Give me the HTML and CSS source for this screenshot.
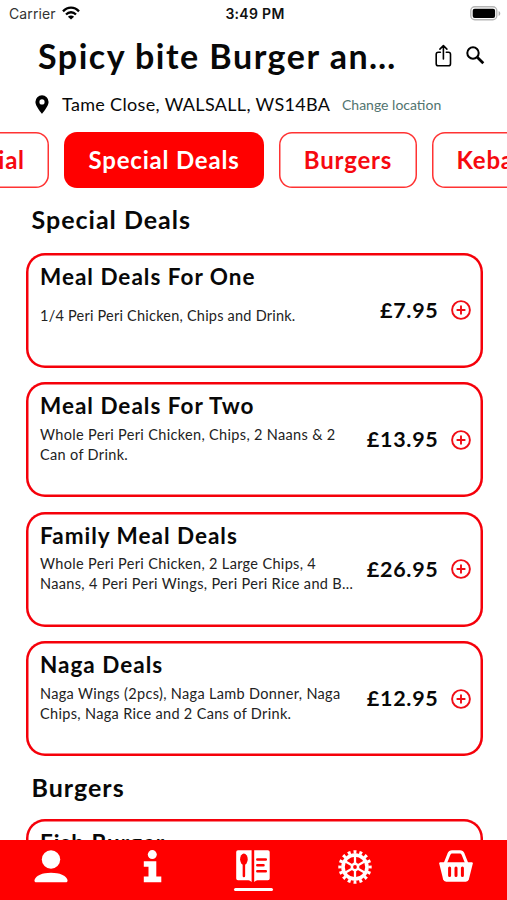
FILE: index.html
```html
<!DOCTYPE html>
<html lang="en">
<head>
<meta charset="utf-8">
<meta name="viewport" content="width=device-width, initial-scale=1">
<title>Spicy bite Burger</title>
<link rel="stylesheet" href="styles.css">
</head>
<body>
<div class="app">
  <div class="status">
    <div class="carrier"><span>Carrier</span>
      <svg width="18" height="14" viewBox="0 0 18 14" fill="none" stroke="#000" stroke-width="2.3"><path d="M1 5.4C5.6.4 12.4.4 17 5.4M4 8.5c2.9-3 7.1-3 10 0"/><path d="M9 13.6 5.9 10.8c1.8-1.7 4.4-1.7 6.2 0z" fill="#000" stroke="none"/></svg>
    </div>
    <time class="clock">3:49 PM</time>
    <svg class="battery" width="31" height="15" viewBox="0 0 31 15"><rect x=".8" y=".8" width="26" height="13" rx="4" fill="#fff" stroke="#b5b5b5" stroke-width="1.4"/><rect x="2.7" y="2.7" width="22.4" height="9.2" rx="2" fill="#000"/><path d="M28.6 5c2.2.7 2.2 4.3 0 5z" fill="#aaa"/></svg>
  </div>
  <header class="header">
    <h1 class="title">Spicy bite Burger an…</h1>
    <svg class="share" width="17" height="24" viewBox="0 0 17 24" fill="none" stroke="#000" stroke-width="1.6" stroke-linecap="round" stroke-linejoin="round"><path d="M5.4 8.2H3.3Q1.2 8.2 1.2 10.3v9.4q0 2.1 2.1 2.1h10.1q2.1 0 2.1-2.1v-9.4q0-2.1-2.1-2.1h-2.1M8.4 15V1.8M4.9 5.1l3.5-3.5 3.5 3.5"/></svg>
    <svg class="search" width="19" height="19" viewBox="0 0 19 19" fill="none" stroke="#000"><circle cx="7" cy="7" r="5.7" stroke-width="2"/><path d="M11.3 11.3l6 6" stroke-width="2.7"/></svg>
  </header>
  <div class="location">
    <svg width="14" height="19" viewBox="0 0 14 19"><path fill-rule="evenodd" d="M7 .3A6.6 6.6 0 0 0 .4 6.9C.4 11.2 7 18.7 7 18.7s6.6-7.5 6.6-11.8A6.6 6.6 0 0 0 7 .3zm0 4a2.6 2.6 0 1 1 0 5.2 2.6 2.6 0 0 1 0-5.2z"/></svg>
    <span class="address">Tame Close, WALSALL, WS14BA</span>
    <a class="change">Change location</a>
  </div>
  <nav class="tabs">
    <div class="tab tab-first">Special</div>
    <div class="tab tab-active">Special Deals</div>
    <div class="tab tab-burgers">Burgers</div>
    <div class="tab tab-last">Kebabs</div>
  </nav>
  <main class="menu">
    <h2 class="section">Special Deals</h2>
    <article class="card">
      <div class="info"><h3>Meal Deals For One</h3><p class="single">1/4 Peri Peri Chicken, Chips and Drink.</p></div>
      <span class="price">£7.95</span>
      <svg class="add" width="20" height="20" viewBox="0 0 20 20"><circle cx="10" cy="10" r="8.9"/><path d="M10 5.6v8.8M5.6 10h8.8"/></svg>
    </article>
    <article class="card">
      <div class="info"><h3>Meal Deals For Two</h3><p>Whole Peri Peri Chicken, Chips, 2 Naans &amp; 2<br>Can of Drink.</p></div>
      <span class="price">£13.95</span>
      <svg class="add" width="20" height="20" viewBox="0 0 20 20"><circle cx="10" cy="10" r="8.9"/><path d="M10 5.6v8.8M5.6 10h8.8"/></svg>
    </article>
    <article class="card">
      <div class="info"><h3>Family Meal Deals</h3><p>Whole Peri Peri Chicken, 2 Large Chips, 4<br>Naans, 4 Peri Peri Wings, Peri Peri Rice and B…</p></div>
      <span class="price">£26.95</span>
      <svg class="add" width="20" height="20" viewBox="0 0 20 20"><circle cx="10" cy="10" r="8.9"/><path d="M10 5.6v8.8M5.6 10h8.8"/></svg>
    </article>
    <article class="card">
      <div class="info"><h3>Naga Deals</h3><p>Naga Wings (2pcs), Naga Lamb Donner, Naga<br>Chips, Naga Rice and 2 Cans of Drink.</p></div>
      <span class="price">£12.95</span>
      <svg class="add" width="20" height="20" viewBox="0 0 20 20"><circle cx="10" cy="10" r="8.9"/><path d="M10 5.6v8.8M5.6 10h8.8"/></svg>
    </article>
    <h2 class="section">Burgers</h2>
    <article class="card">
      <div class="info"><h3>Fish Burger</h3></div>
    </article>
  </main>
  <footer class="bottom">
    <div class="item"><svg width="34" height="34" viewBox="0 0 34 34" fill="#fff"><circle cx="17" cy="9.5" r="9.2"/><path d="M.5 30C1.6 25.6 8.5 22.8 17 22.8S32.400 25.600 33.500 30q.4 2.300-2 2.300H2.500Q.1 32.300.5 30z"/></svg></div>
    <div class="item"><svg width="34" height="34" viewBox="0 0 34 34" fill="#fff"><circle cx="17.300" cy="4.600" r="4.500"/><path d="M8.800 11.300H21.300V26.500H26.300V32.300H8.800V26.500H13.500V16.700H8.800z"/></svg></div>
    <div class="item item-on"><svg width="34" height="34" viewBox="0 0 34 34"><path d="M2 .3H15.600V32Q14 30.300 12.500 30.300H2Q.2 30.300.2 28.500V2Q.2.3 2 .3zM18.200.3H31.900Q33.700.3 33.700 2V28.500Q33.700 30.300 31.900 30.300H21.400Q19.800 30.300 18.200 32z" fill="#fff"/><ellipse cx="7.900" cy="9.200" rx="3.800" ry="5.700" fill="red"/><path d="M7.900 12V26M21.300 9.600h8.500M21.300 15.300h6.200M21.300 21.300h8.500" stroke="red" stroke-width="2.500" stroke-linecap="round"/></svg></div>
    <div class="item"><svg width="34" height="34" viewBox="0 0 34 34" fill="none" stroke="#fff"><circle cx="17" cy="17" r="12" stroke-width="3.600"/><circle cx="17" cy="17" r="15" stroke-width="3.400" pathLength="64" stroke-dasharray="2 2" stroke-dashoffset="1"/><path d="M17 5V29M6.600 11l20.800 12M6.600 23l20.800-12" stroke-width="2.300"/><circle cx="17" cy="17" r="4.400" fill="#fff" stroke="none"/><circle cx="17" cy="17" r="1.900" fill="red" stroke="none"/></svg></div>
    <div class="item"><svg width="34" height="34" viewBox="0 0 34 34" fill="none" stroke="#fff"><path d="M6 14l4-10q.9-2.100 3-2.100h8q2.100 0 3 2.100l4 10" stroke-width="3.200"/><path d="M1 12.200H33q1 .2.800 1.300L29.900 29.300Q29.200 31.700 26.800 31.700H7.200Q4.800 31.700 4.100 29.300L.2 13.500Q0 12.400 1 12.200z" fill="#fff" stroke="none"/><path d="M10.600 18v7.600M17 18v7.600M23.400 18v7.600" stroke="red" stroke-width="3" stroke-linecap="round"/></svg></div>
  </footer>
</div>
</body>
</html>
```
FILE: styles.css
```css
* { box-sizing: border-box; }
body { margin: 0; background: #fff; color: #080808; font-family: Lato, sans-serif; }
h1, h2, h3, p { margin: 0; }
svg { display: block; flex: none; }
.app { width: 507px; height: 900px; display: flex; flex-direction: column; overflow: hidden; white-space: nowrap; }
.status { height: 26px; flex: none; display: grid; grid-template-columns: 1fr auto 1fr; align-items: center; padding: 0 6px 0 9px; font-family: Inter, sans-serif; font-size: 14px; }
.carrier { display: flex; align-items: center; gap: 6px; color: #333; letter-spacing: .1px; }
.clock { font-weight: 600; color: #111; letter-spacing: .3px; }
.battery { justify-self: end; }
.header { height: 58px; flex: none; display: flex; align-items: center; padding: 1px 0 0 38px; }
.title { width: 397px; font-size: 34px; line-height: 40px; font-weight: 700; letter-spacing: 1.5px; }
.search { margin-left: 14px; }
.location { height: 39px; flex: none; display: flex; align-items: center; padding: 2px 0 0 35px; }
.address { width: 269px; margin-left: 13px; padding-bottom: 1px; font-size: 18px; letter-spacing: .33px; }
.change { margin-left: 11px; padding-bottom: 1px; font-size: 14px; color: #52746f; }
.tabs { height: 65px; flex: none; display: flex; gap: 15px; padding-top: 9px; margin-left: -76px; }
.tab { height: 56px; flex: none; display: flex; align-items: center; justify-content: center; padding-bottom: 2px; box-shadow: inset 0 0 0 1.500px #f33; border-radius: 13px; color: #f60910; font-size: 24px; font-weight: 700; letter-spacing: .8px; }
.tab-first { width: 125px; padding-right: 4px; }
.tab-active { width: 200px; background: red; box-shadow: none; color: #fff; }
.tab-burgers { width: 138px; }
.tab-last { width: 132px; }
.menu { flex: 1; min-height: 0; overflow: hidden; padding: 0 25.500px; }
.section { height: 64.500px; padding: 14px 0 0 6px; font-size: 25px; line-height: 34px; font-weight: 700; letter-spacing: 1px; }
.card { width: 457px; height: 115px; margin-bottom: 14.500px; display: flex; align-items: center; box-shadow: inset 0 0 0 2.500px #f5000a; border-radius: 19px; padding: 0 12px 0 14.500px; }
.card + .section { height: 49px; padding-top: 0; margin-top: -1px; }
.info { align-self: flex-start; flex: 1; min-width: 0; padding-top: 9px; }
.info h3 { font-size: 22.500px; line-height: 30px; font-weight: 700; letter-spacing: 1px; }
.info p { padding-top: 3.500px; font-size: 14.500px; line-height: 20px; letter-spacing: .33px; color: #222; }
.info .single { padding-top: 14px; letter-spacing: .22px; }
.price { font-size: 21.500px; font-weight: 700; letter-spacing: .7px; margin-right: 12px; padding-bottom: 1px; }
.add { fill: none; stroke: #f00d16; stroke-width: 1.900; }
.bottom { height: 60px; flex: none; background: red; display: grid; grid-template-columns: repeat(5, 1fr); }
.item { display: flex; flex-direction: column; align-items: center; padding-top: 10px; }
.item-on::after { content: ""; width: 39px; height: 3px; border-radius: 2px; background: #fff; margin-top: 4px; }
```
